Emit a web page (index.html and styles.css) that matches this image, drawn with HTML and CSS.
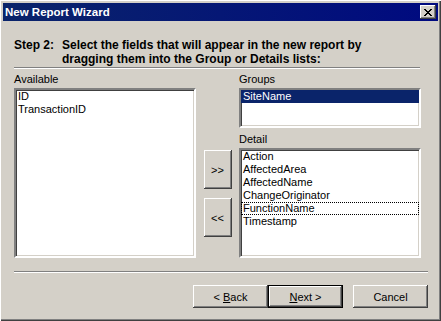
FILE: index.html
```html
<!DOCTYPE html>
<html lang="en">
<head>
    <meta charset="UTF-8">
    <title>New Report Wizard</title>
    <link rel="stylesheet" href="styles.css">
</head>
<body>

    <div class="window">
        <div class="titlebar">
            <span class="title">New Report Wizard</span>
            <button class="close-btn">
                <svg width="8" height="7" viewBox="0 0 8 7" shape-rendering="crispEdges">
                    <rect x="0" y="0" width="2" height="1"/><rect x="6" y="0" width="2" height="1"/>
                    <rect x="1" y="1" width="2" height="1"/><rect x="5" y="1" width="2" height="1"/>
                    <rect x="2" y="2" width="4" height="1"/>
                    <rect x="3" y="3" width="2" height="1"/>
                    <rect x="2" y="4" width="4" height="1"/>
                    <rect x="1" y="5" width="2" height="1"/><rect x="5" y="5" width="2" height="1"/>
                    <rect x="0" y="6" width="2" height="1"/><rect x="6" y="6" width="2" height="1"/>
                </svg>
            </button>
        </div>

        <div class="content">
            <div class="step">
                <span class="step-no">Step 2:</span>
                <span class="step-text">Select the fields that will appear in the new report by dragging them into the Group or Details lists:</span>
            </div>
            <div class="sep sep-top"></div>

            <div class="panes">
                <div class="col">
                    <div class="label">Available</div>
                    <div class="listbox list-available">
                        <div class="item">ID</div>
                        <div class="item">TransactionID</div>
                    </div>
                </div>

                <div class="col col-mid">
                    <button class="btn arrow">&gt;&gt;</button>
                    <button class="btn arrow">&lt;&lt;</button>
                </div>

                <div class="col">
                    <div class="label">Groups</div>
                    <div class="listbox list-groups">
                        <div class="item selected">SiteName</div>
                    </div>
                    <div class="label label-detail">Detail</div>
                    <div class="listbox list-detail">
                        <div class="item">Action</div>
                        <div class="item">AffectedArea</div>
                        <div class="item">AffectedName</div>
                        <div class="item">ChangeOriginator</div>
                        <div class="item focused">FunctionName</div>
                        <div class="item">Timestamp</div>
                    </div>
                </div>
            </div>

            <div class="sep sep-bottom"></div>

            <div class="buttons">
                <button class="btn">&lt; <u>B</u>ack</button>
                <button class="btn default"><u>N</u>ext &gt;</button>
                <button class="btn cancel">Cancel</button>
            </div>
        </div>
    </div>

</body>
</html>
```

FILE: styles.css
```css
/* Classic dialog */
body {
    margin: 0;
    background: #d4d0c8;
    font-family: 'Liberation Sans', Arial, sans-serif;
    font-size: 11px;
    color: #000;
}

.window {
    width: 441px;
    height: 321px;
    box-sizing: border-box;
    padding: 3px;
    display: flex;
    flex-direction: column;
    background: #d4d0c8;
    box-shadow: inset 1px 1px #fff, inset -1px -1px #404040, inset -2px -2px #808080;
}

.titlebar {
    height: 18px;
    display: flex;
    align-items: center;
    justify-content: space-between;
    background: linear-gradient(to right, #0a246a, #000a80);
    color: #fff;
}

.title {
    padding-left: 2px;
    font-weight: bold;
    font-size: 11.5px;
    line-height: 18px;
}

.close-btn {
    width: 16px;
    height: 14px;
    margin-right: 2px;
    padding: 0;
    border: none;
    display: flex;
    align-items: center;
    justify-content: center;
    background: #d4d0c8;
    box-shadow: inset -1px -1px #404040, inset 1px 1px #fff, inset -2px -2px #808080;
}

.content {
    flex: 1;
    padding: 17px 10px 0 11px;
}

.step {
    display: flex;
    font-weight: bold;
    font-size: 12px;
    line-height: 14px;
}

.step-no {
    width: 48px;
    flex: none;
}

.step-text {
    width: 320px;
}

.sep {
    border-top: 1px solid #808080;
    border-bottom: 1px solid #fff;
    height: 0;
}

.sep-top {
    width: 406px;
    margin-top: 1px;
}

.sep-bottom {
    width: 414px;
    margin-top: 13px;
}

.panes {
    display: grid;
    grid-template-columns: 182px 43px 182px;
    margin-top: 4px;
}

.label {
    line-height: 13px;
    margin-bottom: 2px;
}

.label-detail {
    margin-top: 5px;
}

.listbox {
    box-sizing: border-box;
    background: #fff;
    border: 2px solid;
    border-color: #808080 #fff #fff #808080;
    box-shadow: inset 1px 1px #404040, inset -1px -1px #d4d0c8;
}

.list-available { height: 170px; }
.list-groups { height: 40px; }
.list-detail { height: 110px; }

.item {
    height: 13px;
    line-height: 13px;
    padding-left: 2px;
    white-space: nowrap;
}

.selected {
    background: #0a246a;
    color: #fff;
}

.focused {
    outline: 1px dotted #000;
    outline-offset: -1px;
}

.col-mid {
    display: flex;
    flex-direction: column;
    align-items: center;
    padding-top: 77px;
    gap: 9px;
}

.btn {
    font-family: inherit;
    font-size: 11px;
    color: #000;
    background: #d4d0c8;
    border: none;
    padding: 0;
    width: 75px;
    height: 23px;
    box-shadow: inset -1px -1px #404040, inset 1px 1px #fff, inset -2px -2px #808080, inset 2px 2px #d4d0c8;
}

.arrow {
    width: 28px;
    height: 39px;
}

.buttons {
    display: flex;
    justify-content: flex-end;
    margin-top: 12px;
}

.default {
    border: 1px solid #000;
    box-shadow: inset -1px -1px #404040, inset 1px 1px #fff, inset -2px -2px #808080;
}

.cancel {
    margin-left: 10px;
}
```
